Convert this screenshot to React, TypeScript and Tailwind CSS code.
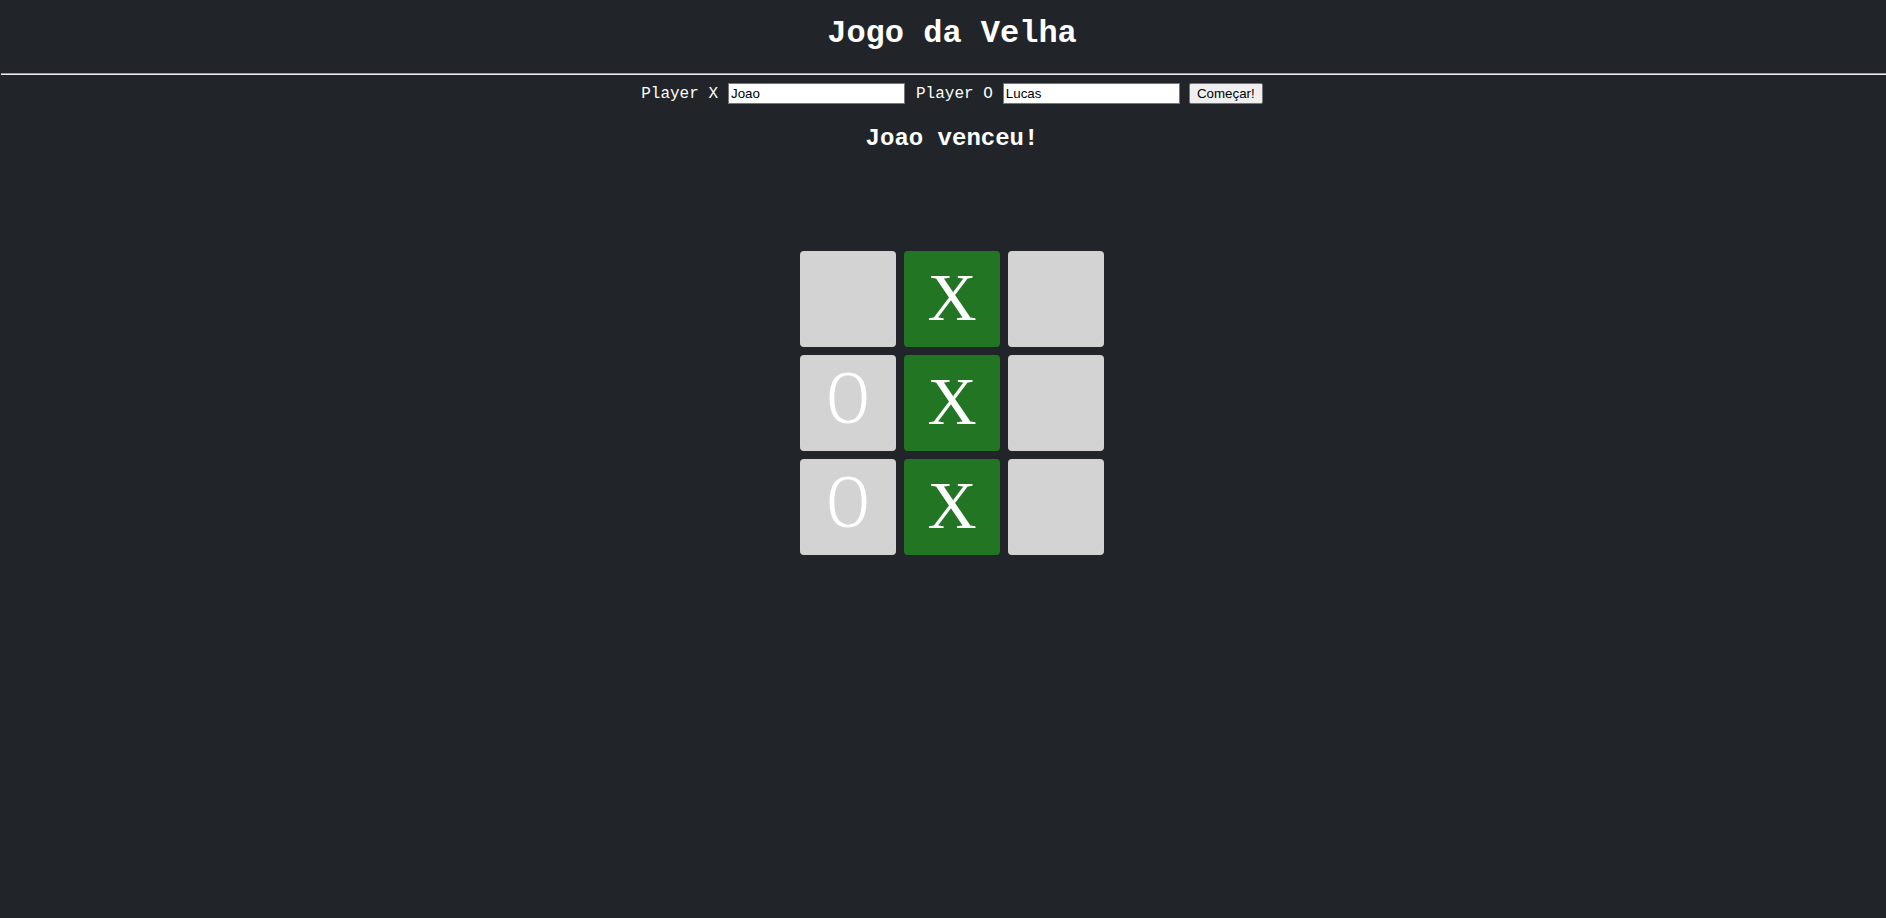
import React from 'react';

type Celula = 'X' | 'O' | null;

const tabuleiro: Celula[] = [null, 'X', null, 'O', 'X', null, 'O', 'X', null];
const vencedoras = [1, 4, 7];

const App: React.FC = () => {
  return (
    <div className="min-h-screen bg-[#212529] text-white font-['Liberation_Mono','Courier_New',monospace]">
      <header className="pl-[18px] pt-[16px] pb-[21px]">
        <h1 className="text-center text-[32px] leading-[36px] font-bold">Jogo da Velha</h1>
      </header>
      <div className="h-[2px] ml-[1px] border-t border-[#9a9a9a] bg-[#eeeeee]" />

      <main className="pl-[18px]">
        {/* Nomes dos jogadores */}
        <div className="flex justify-center items-center mt-[8px] h-[21px]">
          <label className="mt-[2px] text-[16px] leading-[21px]">Player X</label>
          <input
            defaultValue="Joao"
            className="ml-[10px] w-[177px] h-[21px] bg-white text-black border border-[#767676] px-[2px] text-[13.33px] font-['Liberation_Sans',Arial,sans-serif] outline-none"
          />
          <label className="ml-[11px] mt-[2px] text-[16px] leading-[21px]">Player O</label>
          <input
            defaultValue="Lucas"
            className="ml-[10px] w-[177px] h-[21px] bg-white text-black border border-[#767676] px-[2px] text-[13.33px] font-['Liberation_Sans',Arial,sans-serif] outline-none"
          />
          <button className="ml-[9px] w-[74px] h-[21px] bg-[#efefef] text-black border border-[#767676] rounded-[2px] text-[13.33px] font-['Liberation_Sans',Arial,sans-serif]">
            Começar!
          </button>
        </div>

        {/* Resultado */}
        <h2 className="mt-[21px] text-center text-[24px] leading-[28px] font-bold">Joao venceu!</h2>

        {/* Tabuleiro */}
        <div className="mt-[98px] grid grid-cols-[repeat(3,96px)] gap-[8px] justify-center">
          {tabuleiro.map((valor, i) => (
            <div
              key={i}
              className={`w-[96px] h-[96px] rounded-[4px] flex items-center justify-center leading-none text-white ${
                vencedoras.includes(i) ? 'bg-[#227522]' : 'bg-[#d3d3d3]'
              } ${
                valor === 'X'
                  ? "pb-[5px] text-[68px] font-['Liberation_Serif','Times_New_Roman',serif]"
                  : 'text-[80px] [-webkit-text-stroke:3px_#d3d3d3]'
              }`}
            >
              {valor}
            </div>
          ))}
        </div>
      </main>
    </div>
  );
};

export default App;
